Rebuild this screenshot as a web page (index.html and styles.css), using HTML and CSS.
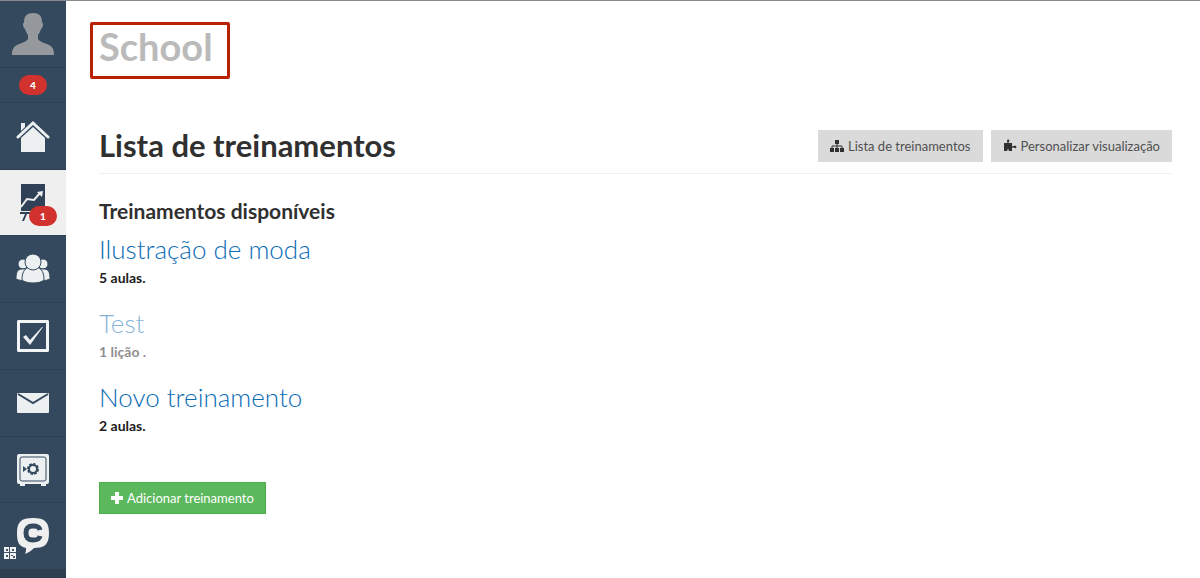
FILE: index.html
```html
<!DOCTYPE html>
<html lang="pt-BR">
<head>
<meta charset="utf-8">
<meta name="viewport" content="width=device-width, initial-scale=1">
<title>School - Lista de treinamentos</title>
<link rel="stylesheet" href="styles.css">
</head>
<body>
<div class="app">
  <nav class="sidebar" aria-label="Menu principal">
    <a class="nav-item nav-profile" href="#perfil" aria-label="Perfil">
      <svg width="44" height="44" viewBox="0 0 44 44" fill="#95999e"><path d="M22 1c6 0 9 3 9 9 0 1 1 1 1 2 0 3-1 4-2 5-1 3-2 5-3 6v4c2 3 7 4 11 6 4 2 5 5 5 10H1c0-5 1-8 5-10 4-2 9-3 11-6v-4c-1-1-2-3-3-6-1-1-2-2-2-5 0-1 1-1 1-2 0-6 3-9 9-9z"/></svg>
    </a>
    <a class="nav-item nav-alerts" href="#avisos" aria-label="4 avisos"><span class="badge">4</span></a>
    <a class="nav-item" href="#inicio" aria-label="Início">
      <svg width="34" height="34" viewBox="0 0 34 34"><path d="M5 4h4v4l-4 4z" fill="#ecf0f1"/><path d="M2 18 17 4l15 14" fill="none" stroke="#ecf0f1" stroke-width="3" stroke-linecap="round"/><path d="M5 19 17 8l12 11v14H5z" fill="#ecf0f1"/></svg>
    </a>
    <a class="nav-item nav-active" href="#treinamentos" aria-label="Treinamentos" aria-current="page">
      <svg width="34" height="38" viewBox="0 0 34 38"><path d="M5 0h24v27H5zM4 28h24v2H4zM9 30h2l-3 7H6zM16 30h2v5h-2z" fill="#2f4156"/><path d="m5 23 6-8 7 1 6-7" fill="none" stroke="#efefef" stroke-width="2"/><path d="m21 8 6-1-1 6z" fill="#efefef"/></svg>
      <span class="badge badge-over">1</span>
    </a>
    <a class="nav-item" href="#usuarios" aria-label="Usuários">
      <svg width="34" height="34" viewBox="0 0 34 34" fill="#ecf0f1" stroke="#34495e"><circle cx="7" cy="12" r="5"/><circle cx="27" cy="12" r="5"/><path d="M0 27c0-6 1-10 6-10h4v12c-4 0-8-1-10-2zM34 27c0-6-1-10-6-10h-4v12c4 0 8-1 10-2z"/><path d="M6 28c0-7 2-12 8-13h6c6 1 8 6 8 13-4 4-18 4-22 0z"/><circle cx="17" cy="10" r="8"/></svg>
    </a>
    <a class="nav-item" href="#tarefas" aria-label="Tarefas">
      <svg width="34" height="34" viewBox="0 0 34 34"><path fill-rule="evenodd" d="M2 1h30l1 1v30l-1 1H2l-1-1V2zM4 4v26h26V4z" fill="#f2f5f6"/><path d="m7 18 3-2 4 5L26 8h1L14 26z" fill="#ecf0f1"/></svg>
    </a>
    <a class="nav-item" href="#mensagens" aria-label="Mensagens">
      <svg width="34" height="34" viewBox="0 0 34 34"><rect x="1" y="7" width="32" height="20" rx="1" fill="#ecf0f1"/><path d="m2 8 15 9 15-9" fill="none" stroke="#34495e" stroke-width="2"/></svg>
    </a>
    <a class="nav-item nav-safe" href="#cofre" aria-label="Cofre">
      <svg width="34" height="34" viewBox="0 0 34 34"><rect x="1" y="1" width="32" height="30" rx="2" fill="#ecf0f1"/><path d="M4 30h5v3H4zM25 30h5v3h-5z" fill="#ecf0f1"/><rect x="4" y="4" width="26" height="24" rx="2" fill="none" stroke="#34495e"/><circle cx="17" cy="16" r="4" fill="none" stroke="#34495e" stroke-width="2"/><circle cx="17" cy="16" r="5" fill="none" stroke="#34495e" stroke-width="2" stroke-dasharray="2 1" pathLength="24"/><path d="m7 13 4 3-4 3z" fill="#34495e"/></svg>
    </a>
    <a class="nav-item" href="#chat" aria-label="Chat">
      <svg width="34" height="38" viewBox="0 0 34 38"><path d="M17 1c12 0 16 4 16 15s-4 15-15 15c-2 2-4 4-9 6 1-2 1-4 1-6-7-2-9-5-9-15C1 5 5 1 17 1z" fill="#efefef"/><path d="M24 13c-1-4-4-4-7-4-5 0-7 2-7 7s2 7 7 7c3 0 6 0 7-4" fill="none" stroke="#34495e" stroke-width="5"/></svg>
      <svg class="qr" width="12" height="12" viewBox="0 0 12 12"><path d="M0 0h12v12H0z" fill="#43536a"/><path d="M0 0h5v5H0zM6 0h6v5H6zM0 6h5v6H0zM6 6h6v6H6z" fill="#f2f3f5"/><path d="M2 2h2v2H2zM8 2h2v2H8zM2 8h2v2H2zM7 8h2v1H7zM9 9h2v2H9z" fill="#43536a"/></svg>
    </a>
  </nav>
  <main class="content">
    <h1 class="brand">School</h1>
    <header class="page-header">
      <h2 class="page-title">Lista de treinamentos</h2>
      <div class="actions">
        <button class="button" type="button">
          <svg width="14" height="14" viewBox="0 0 14 14" fill="#303030"><path d="M5 1h4v4H5zM0 9h4v4H0zM5 9h4v4H5zM10 9h4v4h-4z"/><path d="M7 4v6M2 10V7h10v3" fill="none" stroke="#303030"/></svg>
          Lista de treinamentos
        </button>
        <button class="button" type="button">
          <svg width="14" height="14" viewBox="0 0 14 14" fill="#303030"><path d="M1 4h3c1-1 0-1 0-2s1-2 2-1 0 2-1 3h4v3c1 1 2-1 4 0 1 1 0 3-1 2-1 0-2-1-3 0v3H6c-1-1 0-2-1-2s0 1-1 2H1z"/></svg>
          Personalizar visualização
        </button>
      </div>
    </header>
    <section>
      <h3 class="section-title">Treinamentos disponíveis</h3>
      <ul class="courses">
        <li class="course"><a class="course-link" href="#ilustracao">Ilustração de moda</a><p class="course-info">5 aulas.</p></li>
        <li class="course course-muted"><a class="course-link" href="#test">Test</a><p class="course-info">1 lição .</p></li>
        <li class="course"><a class="course-link" href="#novo">Novo treinamento</a><p class="course-info">2 aulas.</p></li>
      </ul>
      <button class="button button-add" type="button">
        <svg width="12" height="12" viewBox="0 0 12 12" fill="#fff"><path d="M4 0h4v4h4v4H8v4H4V8H0V4h4z"/></svg>
        Adicionar treinamento
      </button>
    </section>
  </main>
</div>
</body>
</html>
```
FILE: styles.css
```css
* { box-sizing: border-box; }

body {
  margin: 0;
  background: #fff;
  color: #303030;
  font-family: Lato, "Open Sans", sans-serif;
}

h1, h2, h3, p, ul { margin: 0; padding: 0; }

.app {
  display: flex;
  min-height: 100vh;
  border-top: 1px solid #8c8a90;
}

.sidebar {
  display: flex;
  flex-direction: column;
  flex: none;
  width: 66px;
  background: #2d3e50;
}

.nav-item {
  position: relative;
  display: flex;
  align-items: center;
  justify-content: center;
  height: 67px;
  background: #34495e;
  border-bottom: 1px solid #2c3f53;
  text-decoration: none;
}

.nav-alerts { height: 35px; }

.nav-active {
  background: #efefef;
}

.nav-safe,
.nav-active { height: 66px; }

.badge {
  width: 28px;
  height: 20px;
  border-radius: 10px;
  background: #d2322d;
  color: #fff;
  font-size: 10px;
  font-weight: 900;
  line-height: 20px;
  text-align: center;
}

.badge-over {
  position: absolute;
  right: 9px;
  bottom: 9px;
}

.qr {
  position: absolute;
  left: 4px;
  bottom: 10px;
}

.content {
  flex: 1;
  padding: 21px 28px 32px 33px;
}

.brand {
  width: fit-content;
  margin-left: -9px;
  padding: 0 14px 8px 6px;
  border: 3px solid #b92103;
  border-radius: 2px;
  color: #bababa;
  font-size: 38px;
  font-weight: 700;
  line-height: 43px;
}

.page-header {
  display: flex;
  align-items: flex-start;
  justify-content: space-between;
  gap: 16px;
  margin-top: 51px;
  padding-bottom: 11px;
  border-bottom: 1px solid #f0f0f0;
}

.page-title {
  font-size: 31px;
  font-weight: 700;
  line-height: 30px;
}

.actions {
  display: flex;
  gap: 8px;
}

.button {
  display: flex;
  align-items: center;
  gap: 4px;
  height: 32px;
  padding: 0 12px;
  border: 0;
  background: #dadada;
  color: #505050;
  font-family: inherit;
  font-size: 13px;
  white-space: nowrap;
}

.section-title {
  margin-top: 25px;
  font-size: 21px;
  font-weight: 700;
  line-height: 24px;
}

.courses { list-style: none; }

.course {
  height: 74px;
  padding-top: 10px;
}

.course-link {
  display: block;
  width: fit-content;
  color: #0b6cb5;
  font-size: 26px;
  font-weight: 300;
  line-height: 32px;
  text-decoration: none;
}

.course-info {
  margin-top: 4px;
  color: #1c1c1c;
  font-size: 14px;
  font-weight: 700;
  line-height: 18px;
}

.course-muted { opacity: 0.5; }

.button-add {
  margin-top: 37px;
  padding: 0 11px;
  border: 1px solid #4cae4c;
  background: #5cb85c;
  color: #fff;
}
```
